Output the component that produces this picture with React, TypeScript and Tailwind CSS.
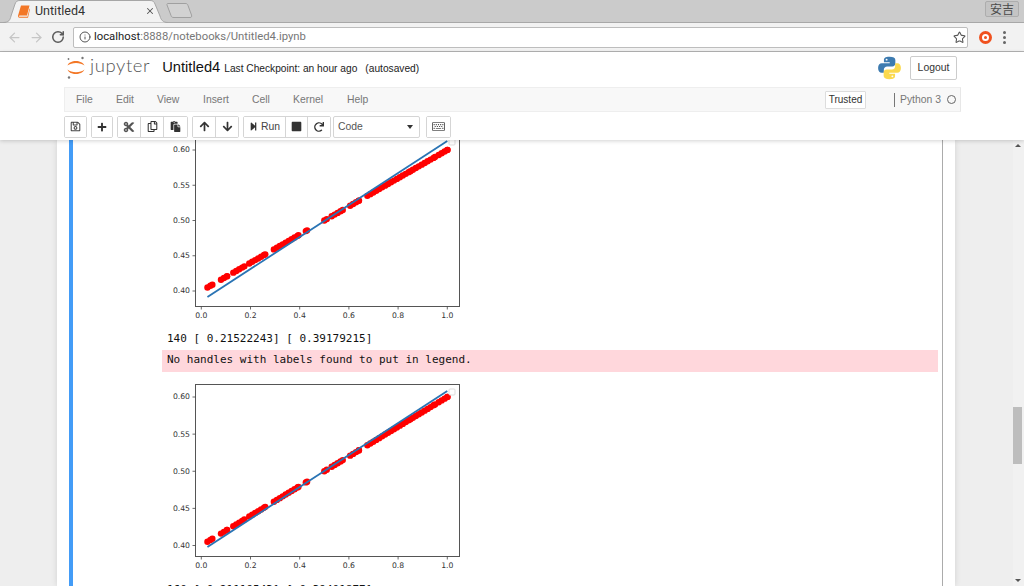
import { ArrowLeft, ArrowRight, Info, RotateCw, Star, X } from "lucide-react";
import {
  FaArrowDown,
  FaArrowUp,
  FaCut,
  FaPaste,
  FaPlus,
  FaRedo,
  FaRegCopy,
  FaRegKeyboard,
  FaRegSave,
  FaStepForward,
  FaStop,
} from "react-icons/fa";
import type { ReactNode } from "react";

// ─── DATA ────────────────────────────────────────────────────────────────────

const menuItems = [
  { label: "File", width: "w-[40px]" },
  { label: "Edit", width: "w-[41px]" },
  { label: "View", width: "w-[46px]" },
  { label: "Insert", width: "w-[49px]" },
  { label: "Cell", width: "w-[41px]" },
  { label: "Kernel", width: "w-[54px]" },
  { label: "Help", width: "w-[30px]" },
];

// runs of x values where the scatter has points
const dotRuns: [number, number][] = [
  [0.025, 0.045],
  [0.08, 0.105],
  [0.13, 0.175],
  [0.195, 0.26],
  [0.295, 0.395],
  [0.425, 0.43],
  [0.5, 0.51],
  [0.53, 0.575],
  [0.605, 0.64],
  [0.675, 0.85],
  [0.86, 0.95],
  [0.965, 1],
];

const dots = dotRuns.flatMap(([from, to]) => {
  const out: number[] = [];
  for (let x = from; x <= to + 0.001; x += 0.012) out.push(x);
  out.push(to);
  return out;
});

const xTicks = [0, 0.2, 0.4, 0.6, 0.8, 1];
const yTicks = [0.4, 0.45, 0.5, 0.55, 0.6];

// ─── PLOT ────────────────────────────────────────────────────────────────────

function Plot({ y60, y40 }: { y60: number; y40: number }) {
  const px = (x: number) => 39.3 + x * 246;
  const py = (y: number) => y40 + ((y - 0.4) / 0.2) * (y60 - y40);

  return (
    <svg width="300" height="193" className="block">
      {dots.map((x, i) => (
        <circle key={i} cx={px(x)} cy={py(0.4 + x * 0.2)} r="3.2" fill="#ff0000" />
      ))}
      <line x1={px(0.025)} y1="163" x2={px(1)} y2="7" stroke="#2a74b4" strokeWidth="1.8" />
      <rect x="33.5" y="0.5" width="264" height="172" fill="none" stroke="#555" strokeWidth="1" />
      <rect x="287" y="5" width="6" height="6" rx="1" fill="#fff" stroke="#ddd" strokeWidth="1" />
      {xTicks.map((t) => (
        <g key={t}>
          <line x1={px(t)} x2={px(t)} y1="172.5" y2="175.5" stroke="#444" strokeWidth="0.8" />
          <text
            x={px(t)}
            y="184"
            textAnchor="middle"
            fill="#333"
            className="text-[7.7px] [font-family:'DejaVu_Sans',sans-serif]"
          >
            {t.toFixed(1)}
          </text>
        </g>
      ))}
      {yTicks.map((t) => (
        <g key={t}>
          <line x1="30.5" x2="33.5" y1={py(t)} y2={py(t)} stroke="#444" strokeWidth="0.8" />
          <text
            x="28"
            y={py(t) + 2.4}
            textAnchor="end"
            fill="#333"
            className="text-[7.7px] [font-family:'DejaVu_Sans',sans-serif]"
          >
            {t.toFixed(2)}
          </text>
        </g>
      ))}
    </svg>
  );
}

// ─── LOGOS ───────────────────────────────────────────────────────────────────

function JupyterMark() {
  return (
    <svg width="20" height="25" viewBox="0 0 20 25" className="block">
      <path d="M1.5 10.5C3.5 4.5 16 4.5 18.5 10.5 14.5 7 5.5 7 1.5 10.5Z" fill="#f37726" />
      <path d="M1.5 14.5C3.5 20.5 16 20.5 18.5 14.5 14.5 18 5.5 18 1.5 14.5Z" fill="#f37726" />
      <circle cx="16.5" cy="3" r="1.2" fill="#767677" />
      <circle cx="2.5" cy="4" r="0.9" fill="#767677" />
      <circle cx="3" cy="22.5" r="1.2" fill="#767677" />
    </svg>
  );
}

const snake =
  "M12 .3C7.2.3 6.2 1.9 6.2 3.6V6.1h6v.9H4C1.6 7 .1 9 .1 12s1.5 5 3.7 5h2.3v-3.1c0-2 1.5-3.5 3.5-3.5h5.4c1.8 0 3.1-1.3 3.1-3V3.6C18.100 1.600 16 .3 12 .3Z";

function PythonLogo() {
  return (
    <svg width="23" height="24" viewBox="0 0 24 24" className="block">
      <path d={snake} fill="#3d7bb0" />
      <circle cx="9" cy="3.3" r="1" fill="#fff" />
      <g transform="rotate(180 12 12)">
        <path d={snake} fill="#fbd94e" />
        <circle cx="9" cy="3.3" r="1" fill="#fff" />
      </g>
    </svg>
  );
}

function BookIcon() {
  return (
    <svg width="12" height="13" viewBox="0 0 12 13" className="block">
      <path d="M3 .5H11.500L9 10.500H1.800C.8 10.500.4 11.500 1.500 11.800H9.500L11.500 3.500 12 4 10 12.700H1.500C0 12.700-.2 11.200.2 10Z" fill="#f37726" />
    </svg>
  );
}

// ─── TOOLBAR BITS ────────────────────────────────────────────────────────────

function Btn({ children, className = "w-[23px]" }: { children: ReactNode; className?: string }) {
  return (
    <div
      className={`flex h-[20px] items-center justify-center border-r border-[#d5d5d5] bg-white text-[#333] last:border-r-0 ${className}`}
    >
      {children}
    </div>
  );
}

function Group({ children }: { children: ReactNode }) {
  return <div className="flex rounded-[2px] border border-[#d5d5d5] bg-white">{children}</div>;
}

// ─── MAIN EXPORT ─────────────────────────────────────────────────────────────

export default function App() {
  return (
    <div className="flex h-[586px] w-[1024px] flex-col overflow-hidden bg-white font-['Liberation_Sans',sans-serif]">
      {/* Tab strip */}
      <div className="flex h-[23px] shrink-0 items-end justify-between border-b border-[#a8a8a8] bg-[#cbcbcb]">
        <div className="flex items-end pl-[3px]">
          <div className="relative flex h-[22px] w-[165px] items-center pl-[15px] pr-[12px]">
            <svg width="165" height="23" className="absolute left-0 top-0">
              <path d="M0 22.500C6 22.500 7 20 8 16L12 4C13 1.500 14 .5 17 .5H147C150 .5 151 1.500 152 4L157 16C158 20 160 22.500 165 22.500" fill="#f2f2f2" stroke="#a6a6a6" />
            </svg>
            <div className="relative flex w-full items-center">
              <BookIcon />
              <span className="ml-[5px] flex-1 text-[12.500px] text-[#333] font-['Roboto',sans-serif]">Untitled4</span>
              <X size={10} strokeWidth={2.5} className="mr-[1px] text-[#555]" />
            </div>
          </div>
          <svg width="28" height="16" className="-ml-[2px] mb-[3px]">
            <path d="M2 .5H19C21 .5 21.500 1 22 2.500L25.500 12C26 13.500 25.500 14.500 24 14.500H8C6 14.500 5.500 14 5 12.500L1 2C.8 1 1 .5 2 .5Z" fill="#d2d2d2" stroke="#a0a0a0" />
          </svg>
        </div>
        <div className="mb-[5px] mr-[5px] flex h-[16px] w-[34px] items-center justify-center rounded-[2px] border border-[#adadad] bg-[#c4c4c4] text-[12px] text-[#4a4a4a] font-['Noto_Sans_CJK_SC',sans-serif]">
          安吉
        </div>
      </div>

      {/* Address bar */}
      <div className="flex h-[29px] shrink-0 items-center border-b border-[#b4b4b4] bg-[#f2f2f2]">
        <ArrowLeft size={15} strokeWidth={2} className="ml-[7px] text-[#c6c6c6]" />
        <ArrowRight size={15} strokeWidth={2} className="ml-[7px] text-[#c6c6c6]" />
        <RotateCw size={14} strokeWidth={2.6} className="ml-[7px] text-[#5a5a5a]" />
        <div className="ml-[8px] flex h-[21px] w-[895px] items-center rounded-[2px] border border-[#bdbdbd] bg-white pl-[5px] pr-[1px]">
          <Info size={12} strokeWidth={2} className="text-[#555]" />
          <span className="ml-[3px] flex-1 text-[11.300px] text-[#777] font-['Roboto',sans-serif]">
            <span className="text-[#222]">localhost</span>:8888/notebooks/Untitled4.ipynb
          </span>
          <Star size={13} strokeWidth={2} className="text-[#555]" />
        </div>
        <div className="ml-[11px] flex h-[13px] w-[13px] items-center justify-center rounded-full bg-[#f0511e]">
          <div className="h-[7px] w-[7px] rounded-full border-2 border-white" />
        </div>
        <div className="ml-[11px] flex flex-col gap-[2px]">
          <div className="h-[3px] w-[3px] rounded-full bg-[#666]" />
          <div className="h-[3px] w-[3px] rounded-full bg-[#666]" />
          <div className="h-[3px] w-[3px] rounded-full bg-[#666]" />
        </div>
      </div>

      {/* Jupyter header */}
      <div className="z-10 shrink-0 bg-white shadow-[0_1px_4px_rgba(0,0,0,0.18)]">
        <div className="flex h-[35px] items-center pb-[4px] pl-[66px] pr-[67px]">
          <JupyterMark />
          <span className="ml-[4px] -mt-[3px] text-[18.500px] tracking-[0.6px] text-[#555] font-['Lato',sans-serif] font-light">
            jupyter
          </span>
          <span className="ml-[12px] -mt-[1px] text-[14.700px] text-[#111]">Untitled4</span>
          <span className="ml-[4px] mt-[3px] text-[10.200px] text-[#222]">Last Checkpoint: an hour ago</span>
          <span className="ml-[8px] mt-[3px] flex-1 text-[10.200px] text-[#222]">(autosaved)</span>
          <PythonLogo />
          <div className="ml-[9px] flex h-[24px] w-[47px] items-center justify-center rounded-[2px] border border-[#ccc] text-[10.400px] text-[#333]">
            Logout
          </div>
        </div>

        {/* Menu bar */}
        <div className="ml-[64px] mr-[63px] flex h-[25px] items-center border border-r-[#e7e7e7] border-[#eee] bg-[#f8f8f8] pl-[11px] pr-[4px] text-[10.400px] text-[#777]">
          {menuItems.map((m) => (
            <span key={m.label} className={m.width}>
              {m.label}
            </span>
          ))}
          <div className="flex-1" />
          <div className="flex h-[18px] w-[41px] items-center justify-center rounded-[1px] border border-[#ddd] bg-white text-[10px] text-[#333]">
            Trusted
          </div>
          <div className="ml-[28px] h-[14px] w-px bg-[#777]" />
          <span className="ml-[5px]">Python 3</span>
          <div className="ml-[6px] h-[9px] w-[9px] rounded-full border-[1.500px] border-[#666]" />
        </div>

        {/* Tool bar */}
        <div className="ml-[64px] flex h-[28px] items-center pt-[1px] text-[10.400px]">
          <Group>
            <Btn className="w-[21px]"><FaRegSave size={11} className="text-[#444]" /></Btn>
          </Group>
          <div className="ml-[4px]">
            <Group>
              <Btn className="w-[20px]"><FaPlus size={10} /></Btn>
            </Group>
          </div>
          <div className="ml-[4px]">
            <Group>
              <Btn><FaCut size={12} className="text-[#555]" /></Btn>
              <Btn><FaRegCopy size={11} /></Btn>
              <Btn><FaPaste size={11} /></Btn>
            </Group>
          </div>
          <div className="ml-[4px]">
            <Group>
              <Btn><FaArrowUp size={11} /></Btn>
              <Btn className="w-[22px]"><FaArrowDown size={11} /></Btn>
            </Group>
          </div>
          <div className="ml-[4px]">
            <Group>
              <Btn className="w-[42px]">
                <FaStepForward size={9} />
                <span className="ml-[3px] text-[#444]">Run</span>
              </Btn>
              <Btn className="w-[22px]"><FaStop size={11} /></Btn>
              <Btn className="w-[22px]"><FaRedo size={10} /></Btn>
            </Group>
          </div>
          <div className="ml-[2px] flex h-[22px] w-[87px] items-center justify-between rounded-[2px] border border-[#d5d5d5] bg-white pl-[4px] pr-[6px] text-[#555]">
            <span>Code</span>
            <span className="h-0 w-0 border-x-[3px] border-t-[4px] border-x-transparent border-t-[#333]" />
          </div>
          <div className="ml-[6px]">
            <Group>
              <Btn><FaRegKeyboard size={13} className="text-[#555]" /></Btn>
            </Group>
          </div>
        </div>
      </div>

      {/* Notebook */}
      <div className="flex min-h-0 flex-1">
        <div className="min-w-0 flex-1 bg-[#eeeeee] pl-[57px]">
          <div className="h-full w-[898px] overflow-hidden bg-white pl-[12px] pr-[12px] shadow-[0_0_6px_rgba(0,0,0,0.12)]">
            <div className="h-full overflow-hidden border-l-4 border-r border-l-[#439cf7] border-r-[#ababab] pl-[89px] pr-[4px]">
              <div className="-mt-[6px]">
                <Plot y60={16} y40={157} />
                <pre className="mt-[3px] h-[17px] pl-[5px] text-[11px] leading-[17px] text-[#111] font-['DejaVu_Sans_Mono',monospace]">
                  140 [ 0.21522243] [ 0.39179215]
                </pre>
                <pre className="mt-[3px] h-[22px] bg-[#ffd7dc] pl-[5px] text-[11px] leading-[20px] text-[#111] font-['DejaVu_Sans_Mono',monospace]">
                  No handles with labels found to put in legend.
                </pre>
                <div className="mt-[12px]">
                  <Plot y60={13} y40={161.5} />
                </div>
                <pre className="mt-[4px] h-[17px] pl-[5px] text-[11px] leading-[17px] text-[#111] font-['DejaVu_Sans_Mono',monospace]">
                  160 [ 0.21119543] [ 0.39401877]
                </pre>
              </div>
            </div>
          </div>
        </div>

        {/* Scrollbar */}
        <div className="flex w-[11px] shrink-0 flex-col items-center bg-[#f1f1f1] pr-[2px] pt-[4px]">
          <span className="h-0 w-0 border-x-[3px] border-b-[3px] border-x-transparent border-b-[#555]" />
          <div className="mt-[260px] h-[57px] w-[9px] bg-[#bdbdbd]" />
          <div className="flex-1" />
          <span className="mb-[4px] h-0 w-0 border-x-[3px] border-t-[3px] border-x-transparent border-t-[#555]" />
        </div>
      </div>
    </div>
  );
}
